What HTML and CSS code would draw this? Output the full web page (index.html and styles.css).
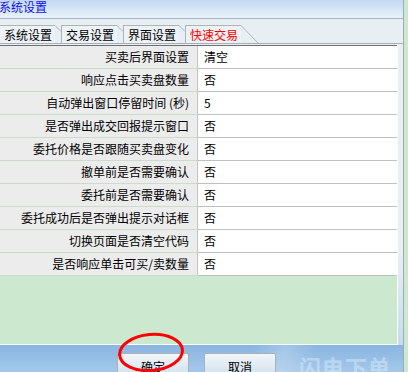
FILE: index.html
```html
<!DOCTYPE html>
<html lang="zh-CN">
<head>
    <meta charset="UTF-8">
    <meta name="viewport" content="width=device-width, initial-scale=1.0">
    <title>系统设置</title>
    <link rel="stylesheet" href="styles.css">
</head>
<body>
    <div class="window">
        <div class="main">
            <div class="titlebar">系统设置</div>

            <div class="tabs">
                <div class="tab first">
                    <span class="tab-label">系统设置</span>
                    <svg class="tab-corner" width="6" height="18"><path d="M0 0.5 L6 6.5"/></svg>
                </div>
                <div class="tab">
                    <span class="tab-label">交易设置</span>
                    <svg class="tab-corner" width="6" height="18"><path d="M0 0.5 L6 6.5"/></svg>
                </div>
                <div class="tab">
                    <span class="tab-label">界面设置</span>
                    <svg class="tab-corner" width="6" height="18"><path d="M0 0.5 L6 6.5"/></svg>
                </div>
                <div class="tab active">
                    <span class="tab-label">快速交易</span>
                    <svg class="tab-corner" width="17" height="18"><path d="M0 0.5 L17 18"/></svg>
                </div>
            </div>

            <div class="content">
                <div class="pane">
                    <div class="grid">
                        <div class="row"><div class="key">买卖后界面设置</div><div class="val">清空</div></div>
                        <div class="row"><div class="key">响应点击买卖盘数量</div><div class="val">否</div></div>
                        <div class="row"><div class="key">自动弹出窗口停留时间 (秒)</div><div class="val">5</div></div>
                        <div class="row"><div class="key">是否弹出成交回报提示窗口</div><div class="val">否</div></div>
                        <div class="row"><div class="key">委托价格是否跟随买卖盘变化</div><div class="val">否</div></div>
                        <div class="row"><div class="key">撤单前是否需要确认</div><div class="val">否</div></div>
                        <div class="row"><div class="key">委托前是否需要确认</div><div class="val">否</div></div>
                        <div class="row"><div class="key">委托成功后是否弹出提示对话框</div><div class="val">否</div></div>
                        <div class="row"><div class="key">切换页面是否清空代码</div><div class="val">否</div></div>
                        <div class="row"><div class="key">是否响应单击可买/卖数量</div><div class="val">否</div></div>
                    </div>
                    <div class="filler"></div>
                </div>
                <div class="gutter"></div>
            </div>

            <div class="footer">
                <button class="btn ok">确定</button>
                <button class="btn">取消</button>
                <span class="watermark">闪电下单</span>
            </div>
        </div>
        <div class="edge"></div>

        <!-- red hand-drawn circle round the OK button -->
        <svg class="mark" width="408" height="372">
            <ellipse cx="151" cy="352.5" rx="31.5" ry="18" transform="rotate(-5 151 352.5)"/>
        </svg>
    </div>
</body>
</html>
```

FILE: styles.css
```css
* {
    box-sizing: border-box;
}

body {
    margin: 0;
    font-family: "Noto Sans CJK SC", "Liberation Sans", sans-serif;
    font-size: 12px;
    color: #000;
    background: #cce8cf;
}

.window {
    position: relative;
    display: flex;
    width: 408px;
    height: 372px;
    overflow: hidden;
}

.main {
    display: flex;
    flex-direction: column;
    width: 404px;
    height: 372px;
    border-right: 1px solid #9eacba;
    background: #e8eff3;
}

.edge {
    flex: 1;
    background: #cce8cf;
}

/* title bar */
.titlebar {
    height: 19px;
    padding-top: 0;
    margin-left: -1px;
    line-height: 14px;
    color: #1010f0;
    background: linear-gradient(#c2d9f1, #e9f1f9);
    border-bottom: 1px solid #a9b6c3;
}

/* tab strip */
.tabs {
    display: flex;
    height: 25px;
    padding-top: 6px;
    border-bottom: 1px solid #a3afbb;
}

.tab {
    display: flex;
    height: 18px;
}

.tab.first {
    margin-left: -1px;
}

.tab-label {
    width: 56px;
    height: 18px;
    padding: 0 3px 0 4px;
    line-height: 17px;
    border-top: 1px solid #aab5c0;
    border-left: 1px solid #aab5c0;
    background: #ecf2f6;
    white-space: nowrap;
}

.tab-corner {
    display: block;
}

.tab-corner path {
    stroke: #aab5c0;
    stroke-width: 1;
    fill: none;
}

.tab.active .tab-label {
    color: #ff0000;
}

/* settings list */
.content {
    display: flex;
    height: 301px;
}

.pane {
    display: flex;
    flex-direction: column;
    width: 398px;
    padding-top: 1px;
    border-right: 1px solid #fff;
    border-bottom: 1px solid #fff;
}

.grid {
    border-top: 1px solid #6f6f6f;
}

.row {
    display: flex;
    height: 23px;
}

.key {
    width: 198px;
    padding-right: 8px;
    line-height: 22px;
    text-align: right;
    white-space: nowrap;
    background: #ececec;
    border-right: 1px solid #c4c4c4;
    border-bottom: 1px solid #c9ddc9;
}

.val {
    flex: 1;
    padding-left: 6px;
    line-height: 22px;
    background: #fff;
    border-bottom: 1px solid #c0c0c0;
}

.filler {
    flex: 1;
    background: #cce8cf;
}

.gutter {
    flex: 1;
    background: linear-gradient(#e8eff3 70%, #c6dcee);
}

/* bottom buttons */
.footer {
    display: flex;
    align-items: flex-start;
    gap: 15px;
    height: 27px;
    padding: 8px 0 0 117px;
    overflow: hidden;
    background:
        linear-gradient(100deg, transparent 62%, rgba(255, 255, 255, 0.22) 70%, transparent 78%),
        linear-gradient(#89b5e0, #a4c8ea);
}

.btn {
    width: 72px;
    height: 24px;
    padding: 4px 0 0;
    font-family: inherit;
    font-size: 12px;
    line-height: 16px;
    color: #000;
    text-align: center;
    border: 1px solid #a9b2bb;
    border-radius: 2px;
    background: linear-gradient(#f2f6f9, #dde9f2 60%, #cfe0ee);
}

.btn.ok {
    width: 72px;
}

.watermark {
    margin-left: auto;
    margin-right: 12px;
    margin-top: 1px;
    font-size: 22px;
    font-weight: bold;
    line-height: 24px;
    letter-spacing: 1px;
    color: rgba(214, 232, 248, 0.55);
}

.mark {
    position: absolute;
    left: 0;
    top: 0;
    pointer-events: none;
}

.mark ellipse {
    fill: none;
    stroke: #ff0000;
    stroke-width: 3;
}
```
